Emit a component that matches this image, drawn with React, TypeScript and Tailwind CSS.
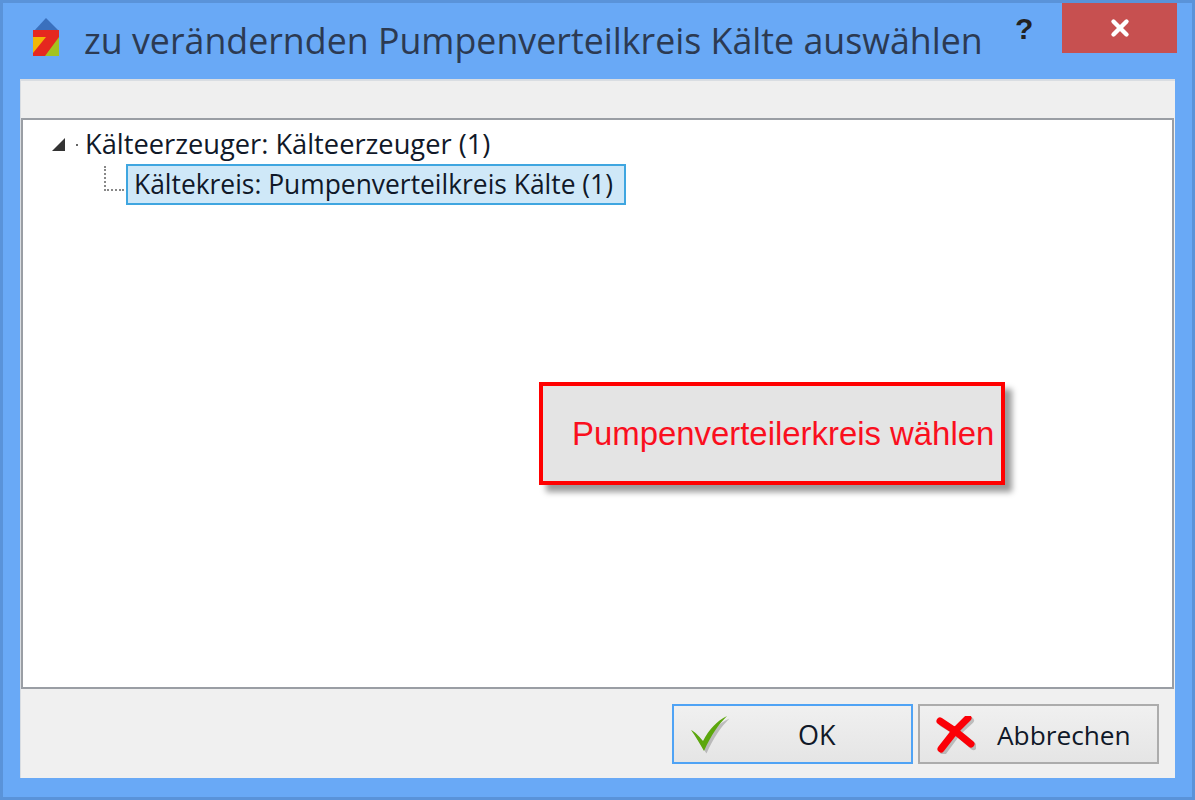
import { X } from 'lucide-react';

function AppLogo() {
  return (
    <svg width="30" height="40" viewBox="0 0 30 40" className="shrink-0">
      <path d="M3 14 L15 1 L28 14 Z" fill="#3a70bd" />
      <rect x="2" y="13" width="26" height="26" fill="#f2b705" />
      <path d="M2 39 H28 V18 Z" fill="#a4c31f" />
      <path d="M2 13 H28 V20 L14 39 H2 V36 L15 20 H2 Z" fill="#e5281f" />
    </svg>
  );
}

function CheckIcon() {
  return (
    <svg width="42" height="40" viewBox="0 0 42 40" className="shrink-0">
      <path d="M3 16 C6 18 9 20 14 27 C20 15 28 7 39 2 C31 10 23 21 16 37 C11 30 7 23 3 16 Z" fill="#000" opacity="0.2" transform="translate(1.5 1.5)" />
      <path d="M2 15 C6 17 9 20 14 26 C20 14 28 6 38 1 C30 9 22 20 15 36 C11 29 7 22 2 15 Z" fill="#5ca70d" />
    </svg>
  );
}

function CrossIcon() {
  return (
    <svg width="40" height="38" viewBox="0 0 40 38" className="shrink-0">
      <path d="M5 6 L20 15 L33 3 M6 34 L20 15 L36 29" fill="none" stroke="#000" strokeOpacity="0.2" strokeWidth="7" strokeLinecap="round" transform="translate(1.5 1.5)" />
      <path d="M4 5 L19 15 L32 2 M5 33 L19 15 L35 28" fill="none" stroke="#fb0007" strokeWidth="7" strokeLinecap="round" />
    </svg>
  );
}

export default function App() {
  return (
    <div className="w-[1195px] h-[800px] overflow-hidden flex flex-col bg-[#69a9f6] border-[3px] border-[#5a93d9] font-['Open_Sans',sans-serif]">
      {/* Title bar */}
      <div className="h-[76px] flex items-start shrink-0 pl-[28px] pr-[15px]">
        <div className="mt-[14px]">
          <AppLogo />
        </div>
        <div className="ml-[23px] mt-[13px] text-[35.75px] leading-[48px] text-[#2c3a52] whitespace-nowrap">
          zu verändernden Pumpenverteilkreis Kälte auswählen
        </div>
        <div className="ml-auto mt-[8px] w-[22px] text-[30px] leading-[36px] font-bold text-[#222] font-['Liberation_Sans',sans-serif]">?</div>
        <div className="ml-[25px] w-[115px] h-[50px] bg-[#c75050] flex items-center justify-center">
          <X size={26} strokeWidth={4} className="text-white" />
        </div>
      </div>

      {/* Client area */}
      <div className="relative mx-[17px] h-[699px] flex flex-col bg-[#f0f0f0] border-l border-t-2 border-[#d9dde2]">
        <div className="h-[37px] shrink-0 bg-[#efefef]" />
        <div className="h-[571px] shrink-0 mr-[1px] bg-white border-2 border-[#9a9ea4] pt-[6px]">
          {/* Tree */}
          <div className="flex items-center h-[37px] pl-[28px] text-[27.25px] text-[#101828]">
            <svg width="16" height="16" viewBox="0 0 16 16" className="shrink-0">
              <path d="M1 14 L14 1 V14 Z" fill="#333333" />
            </svg>
            <span className="ml-[9px] mr-[6px] w-[2px] h-[2px] bg-[#666]" />
            <span className="ml-[1px] whitespace-nowrap">Kälteerzeuger: Kälteerzeuger (1)</span>
          </div>
          <div className="flex items-start pl-[81px] mt-[1px]">
            <div className="w-[20px] h-[25px] mt-[2px] border-l-2 border-b-2 border-dotted border-[#888] shrink-0" />
            <div className="ml-[2px] w-[500px] h-[41px] flex items-center pl-[6px] bg-[#cfe8f8] border-2 border-[#3fa6e0] text-[26.4px] text-[#101828] whitespace-nowrap">
              Kältekreis: Pumpenverteilkreis Kälte (1)
            </div>
          </div>
        </div>

        {/* Footer */}
        <div className="flex-1 flex items-start justify-end gap-[5px] pt-[15px] pr-[16px] bg-[#f0f0f0]">
          <button className="w-[241px] h-[60px] flex items-center pl-[15px] pt-[1px] bg-gradient-to-b from-[#f0f0f0] to-[#e5e5e5] border-2 border-[#4fa3f5] text-[27px] text-[#101828]">
            <CheckIcon />
            <span className="ml-[67px] mt-[2px]">OK</span>
          </button>
          <button className="w-[241px] h-[60px] flex items-center pl-[16px] pt-[1px] bg-gradient-to-b from-[#f0f0f0] to-[#e5e5e5] border-2 border-[#acacac] text-[26.25px] text-[#101828]">
            <CrossIcon />
            <span className="ml-[21px] mt-[2px]">Abbrechen</span>
          </button>
        </div>

        {/* Callout over the tree */}
        <div className="absolute left-[518px] top-[301px] w-[466px] h-[103px] flex items-center pl-[29px] bg-[#e4e4e4] border-[4px] border-[#ff0000] shadow-[7px_7px_6px_rgba(0,0,0,0.4)] text-[32.9px] text-[#fa0f1e] whitespace-nowrap font-['Liberation_Sans',sans-serif]">
          Pumpenverteilerkreis wählen
        </div>
      </div>
    </div>
  );
}
